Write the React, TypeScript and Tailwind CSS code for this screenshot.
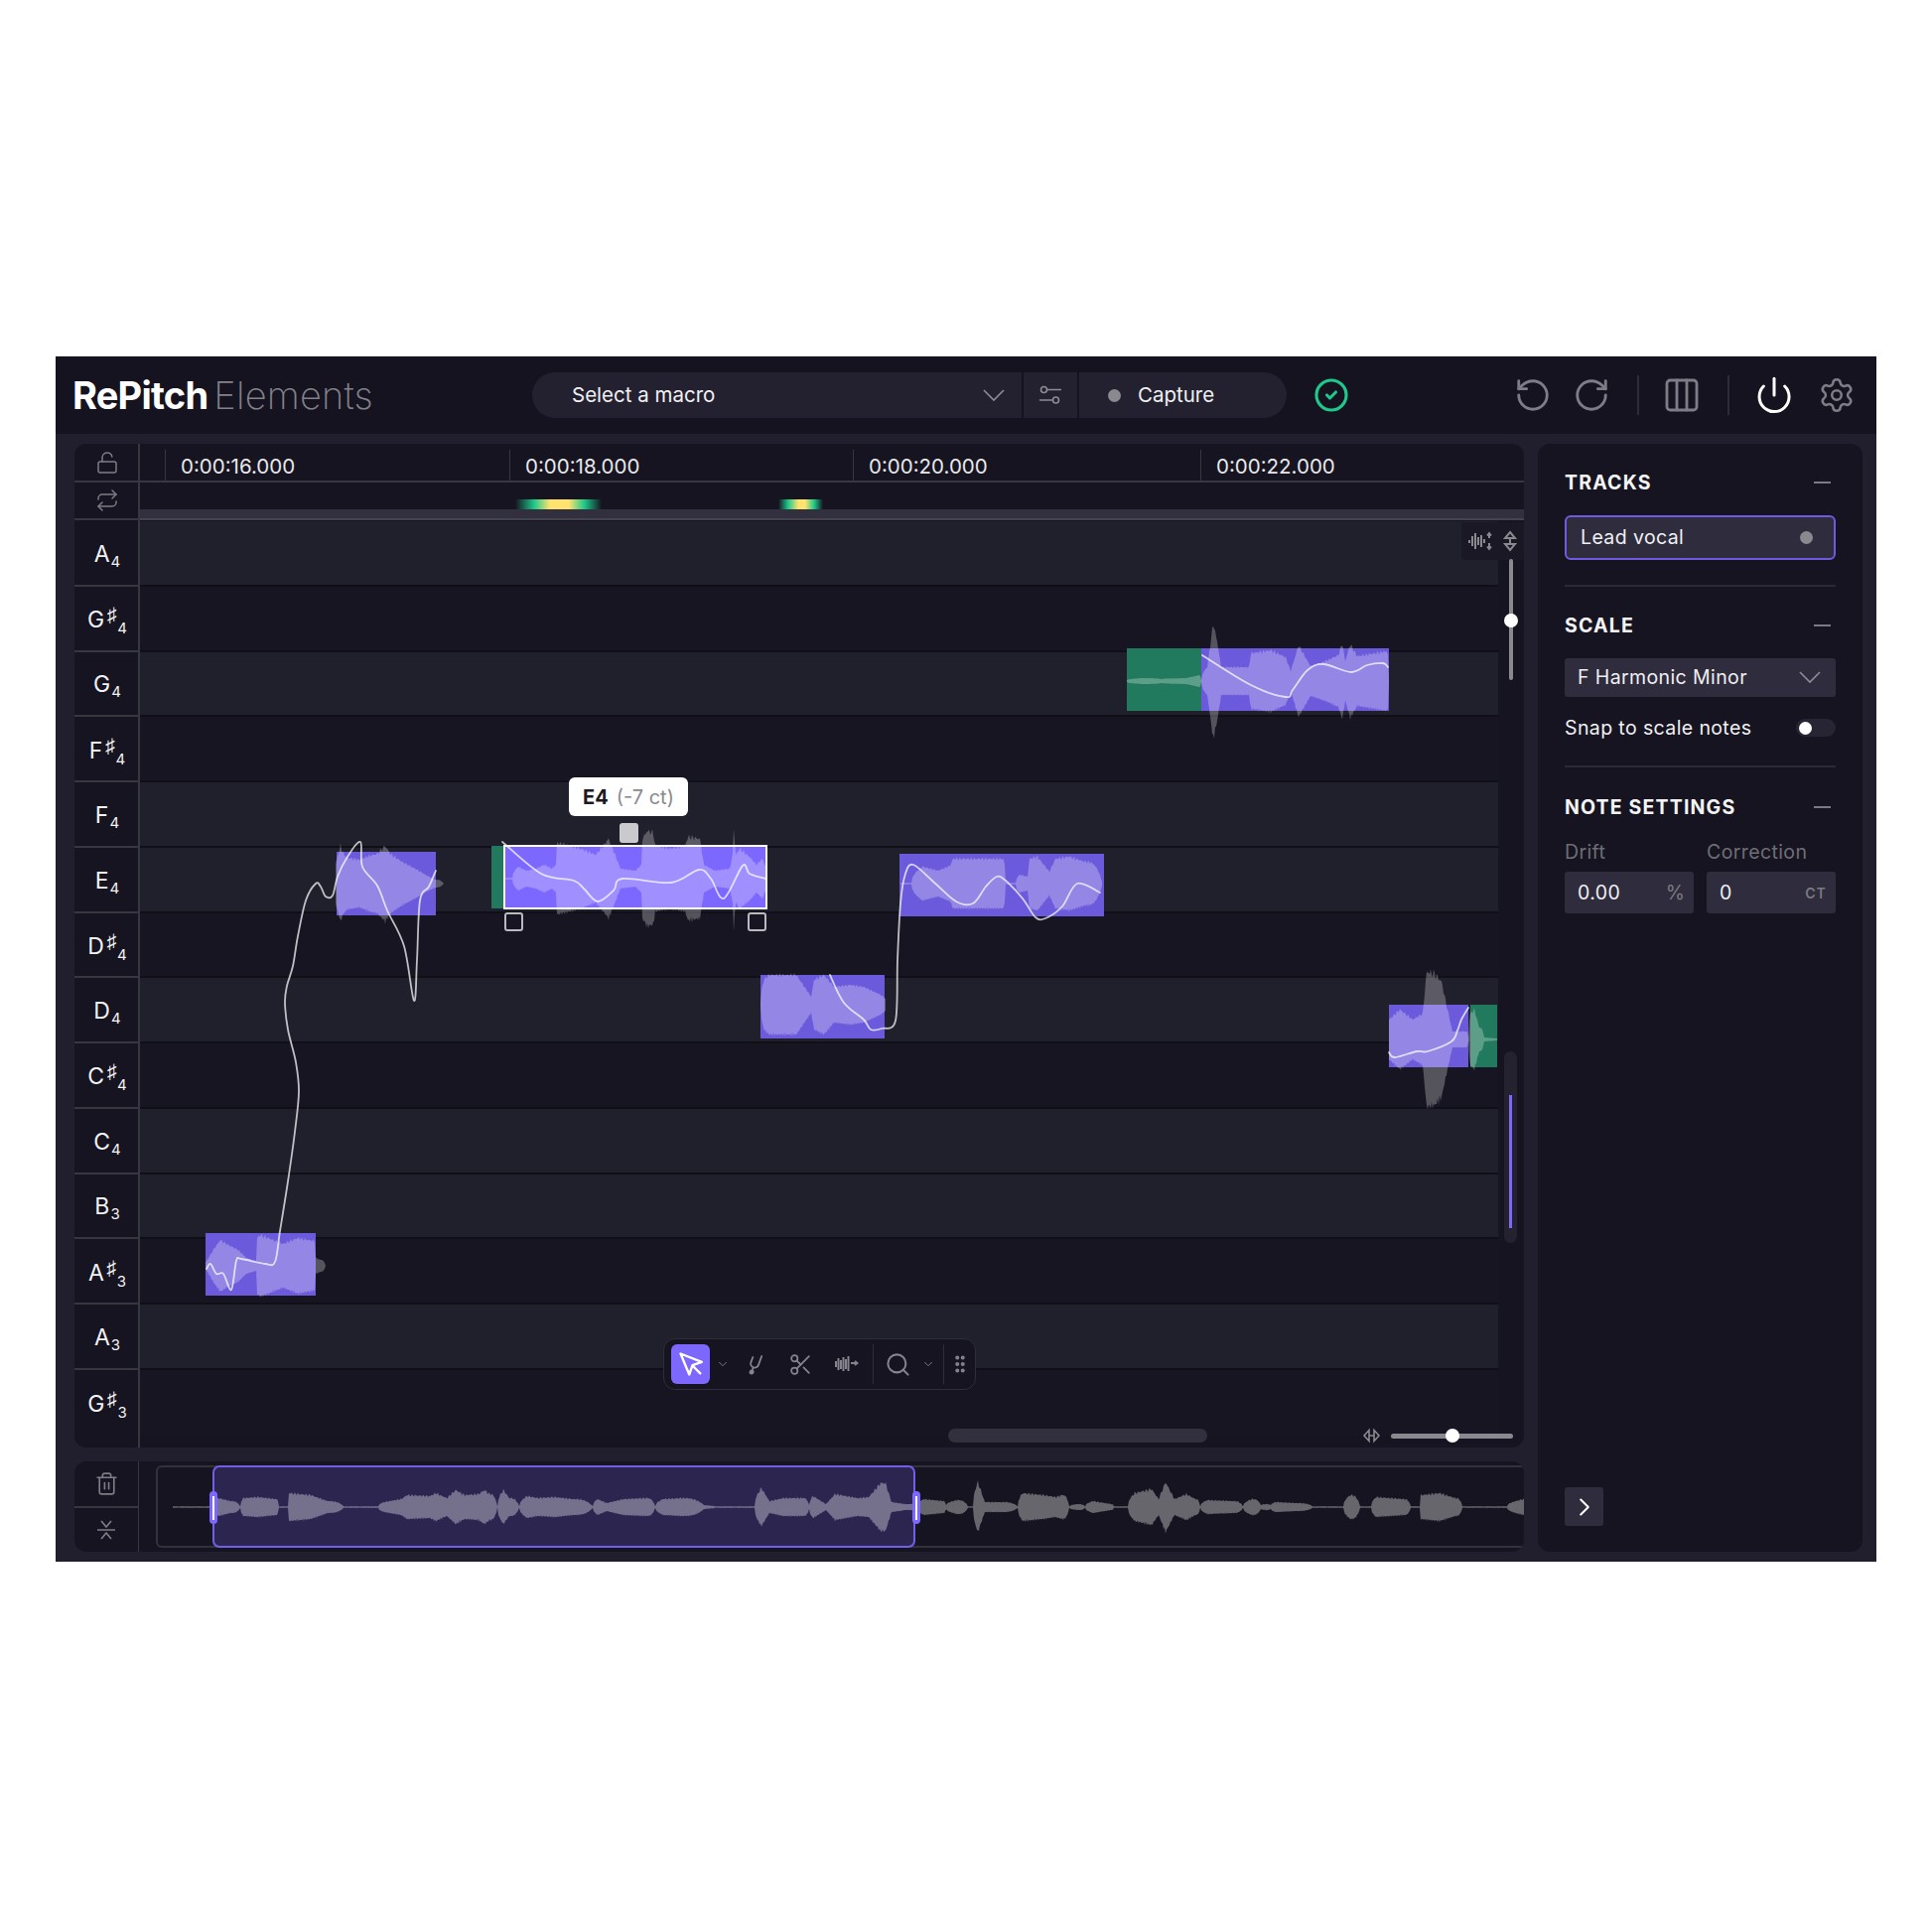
import React from 'react';
import {
  ChevronDown,
  ChevronRight,
  CircleCheck,
  Columns3,
  GripVertical,
  LockOpen,
  Power,
  Repeat,
  RotateCcw,
  RotateCw,
  Scissors,
  Search,
  Settings,
  Trash2,
} from 'lucide-react';

type Pt = [number, number];

// builds a mirrored waveform outline from [x, half height] pairs
function wave(cy: number, env: Pt[], amt = 0.08) {
  const top: string[] = [];
  const bottom: string[] = [];
  const start = env[0][0];
  const end = env[env.length - 1][0];
  let seg = 0;
  let i = 0;
  for (let x = start; x <= end; x += 1) {
    while (seg < env.length - 2 && x > env[seg + 1][0]) seg++;
    const [x0, h0] = env[seg];
    const [x1, h1] = env[seg + 1];
    let t = Math.min((x - x0) / Math.max(x1 - x0, 0.01), 1);
    // lobes swell fast out of the thin line and drop back late
    if (h0 <= 2 && h1 > 2) t = Math.sqrt(t);
    if (h1 <= 2 && h0 > 2) t = t * t * t;
    let h = h0 + (h1 - h0) * t;
    if (h <= 1) h *= 0.7;
    const a = 1 + amt * (Math.sin(i * 1.7) + Math.sin(i * 4.1)) * 0.5;
    const b = 1 + amt * (Math.sin(i * 2.3) + Math.sin(i * 3.3)) * 0.5;
    top.push(`${x.toFixed(1)} ${(cy - h * a).toFixed(1)}`);
    bottom.unshift(`${x.toFixed(1)} ${(cy + h * b).toFixed(1)}`);
    i++;
  }
  return `M${top.join('L')}L${bottom.join('L')}Z`;
}

// smooth line through points
function curve(p: Pt[]) {
  let d = `M${p[0][0]} ${p[0][1]}`;
  for (let i = 0; i < p.length - 1; i++) {
    const a = p[i - 1] || p[i];
    const b = p[i];
    const c = p[i + 1];
    const e = p[i + 2] || c;
    const c1x = b[0] + (c[0] - a[0]) / 6;
    const c1y = b[1] + (c[1] - a[1]) / 6;
    const c2x = c[0] - (e[0] - b[0]) / 6;
    const c2y = c[1] - (e[1] - b[1]) / 6;
    d += `C${c1x.toFixed(1)} ${c1y.toFixed(1)} ${c2x.toFixed(1)} ${c2y.toFixed(1)} ${c[0]} ${c[1]}`;
  }
  return d;
}

const rows = [
  { n: 'A', o: 4, light: true },
  { n: 'G', o: 4, sharp: true },
  { n: 'G', o: 4, light: true },
  { n: 'F', o: 4, sharp: true },
  { n: 'F', o: 4, light: true },
  { n: 'E', o: 4, light: true },
  { n: 'D', o: 4, sharp: true },
  { n: 'D', o: 4, light: true },
  { n: 'C', o: 4, sharp: true },
  { n: 'C', o: 4, light: true },
  { n: 'B', o: 3, light: true },
  { n: 'A', o: 3, sharp: true },
  { n: 'A', o: 3, light: true },
  { n: 'G', o: 3, sharp: true },
];

const noteWaves: [number, Pt[]][] = [
  [1275, [[207, 3], [216, 18], [222, 26], [228, 22], [240, 16], [248, 8], [258, 5], [259, 28], [262, 31], [270, 28], [285, 22], [300, 28], [310, 26], [317, 25], [318, 8], [323, 6], [328, 0]]],
  [890, [[338, 20], [343, 38], [346, 30], [350, 26], [362, 24], [372, 28], [380, 30], [388, 38], [393, 30], [405, 22], [420, 14], [430, 8], [438, 4], [447, 0]]],
  [885, [[508, 1], [516, 1], [522, 12], [530, 8], [540, 10], [548, 14], [556, 10], [560, 14], [561, 36], [570, 34], [585, 30], [600, 24], [610, 36], [613, 40], [618, 28], [625, 10], [640, 8], [646, 14], [647, 40], [652, 48], [658, 46], [660, 33], [675, 30], [690, 33], [693, 42], [705, 40], [709, 14], [720, 8], [735, 10], [738, 24], [739, 52], [741, 24], [745, 30], [755, 22], [762, 14], [768, 20], [771, 12]]],
  [1012, [[766, 2], [770, 26], [775, 30], [802, 30], [813, 14], [817, 8], [820, 25], [830, 30], [840, 18], [857, 20], [870, 18], [887, 10], [892, 6]]],
  [890, [[907, 1], [918, 1], [929, 17], [945, 13], [957, 18], [960, 25], [1010, 25], [1013, 1], [1023, 1], [1027, 9], [1035, 7], [1037, 25], [1045, 27], [1057, 12], [1063, 25], [1077, 27], [1093, 22], [1110, 2]]],
  [686, [[1135, 1], [1150, 3], [1170, 2], [1195, 3], [1208, 6], [1210, 1], [1216, 14], [1222, 58], [1226, 40], [1230, 14], [1258, 14], [1260, 28], [1280, 31], [1295, 24], [1300, 10], [1308, 36], [1320, 15], [1335, 20], [1348, 26], [1352, 38], [1355, 20], [1360, 37], [1367, 25], [1397, 30], [1399, 1]]],
  [1047, [[1399, 20], [1410, 30], [1423, 20], [1433, 26], [1437, 68], [1445, 66], [1452, 58], [1458, 30], [1463, 8], [1477, 8], [1479, 2], [1481, 26], [1485, 30], [1490, 12], [1495, 2], [1508, 1]]],
];

const pitchLines: Pt[][] = [
  [[208, 1278], [212, 1273], [218, 1283], [225, 1283], [233, 1299], [238, 1270], [243, 1268], [267, 1273], [277, 1271], [282, 1240], [290, 1190], [297, 1140], [301, 1100], [298, 1070], [290, 1037], [287, 1010], [289, 993], [295, 973], [300, 943], [308, 907], [318, 890], [323, 893], [328, 903], [335, 902], [340, 883], [350, 863], [363, 848], [365, 873], [380, 892], [390, 917], [407, 953], [417, 1008], [420, 967], [423, 907], [432, 893], [439, 877]],
  [[506, 848], [545, 880], [578, 887], [588, 895], [602, 908], [618, 897], [627, 885], [676, 889], [704, 876], [716, 885], [729, 905], [748, 872], [755, 880], [771, 885]],
  [[836, 982], [850, 1010], [870, 1027], [877, 1037], [888, 1036], [902, 1028], [904, 967], [907, 910], [912, 880], [920, 871], [940, 888], [963, 908], [980, 910], [993, 893], [1004, 883], [1013, 887], [1030, 905], [1043, 924], [1053, 925], [1070, 913], [1085, 890], [1108, 899]],
  [[1211, 660], [1260, 690], [1295, 702], [1302, 695], [1317, 675], [1333, 669], [1361, 677], [1377, 670], [1393, 668], [1398, 672]],
  [[1399, 1060], [1405, 1065], [1427, 1059], [1438, 1059], [1462, 1049], [1468, 1038], [1472, 1027], [1479, 1015]],
];

const miniEnv: Pt[] = [
  [174, 1], [214, 1], [220, 9], [232, 6], [242, 1], [245, 9], [260, 10], [278, 8], [281, 1], [290, 1], [291, 14], [313, 12], [330, 6], [346, 1], [381, 1], [387, 5], [404, 8], [410, 12], [433, 11], [439, 14], [450, 9], [459, 17], [468, 12], [482, 13], [488, 17], [493, 13], [501, 1], [507, 17], [513, 9], [523, 1], [531, 11], [542, 9], [559, 10], [577, 8], [597, 1], [602, 8], [611, 4], [628, 8], [651, 9], [660, 1], [668, 8], [686, 9], [709, 2], [720, 1], [760, 1], [767, 19], [775, 6], [789, 9], [809, 9], [815, 2], [819, 11], [832, 3], [841, 13], [864, 9], [875, 10], [887, 24], [892, 24], [898, 5], [912, 3], [918, 3], [922, 1], [931, 8], [950, 6], [953, 2], [964, 7], [975, 1], [980, 1], [985, 25], [992, 5], [1009, 5], [1025, 1], [1030, 14], [1051, 12], [1063, 10], [1070, 12], [1077, 1], [1086, 3], [1093, 1], [1101, 6], [1119, 3], [1122, 1], [1136, 1], [1143, 14], [1160, 18], [1167, 8], [1174, 25], [1183, 8], [1195, 13], [1204, 8], [1209, 1], [1216, 7], [1242, 6], [1252, 1], [1261, 8], [1270, 2], [1275, 3], [1280, 2], [1285, 5], [1306, 4], [1322, 1], [1353, 1], [1360, 12], [1370, 1], [1381, 1], [1386, 10], [1414, 8], [1421, 1], [1430, 1], [1431, 12], [1450, 14], [1466, 9], [1473, 1], [1518, 1], [1535, 8],
];

function Chev({ width = 22 }: { width?: number }) {
  return (
    <svg width={width} height={width * 0.55} viewBox="0 0 22 12" fill="none" stroke="#8d8c94" strokeWidth="1.6">
      <path d="M1 1l10 10L21 1" />
    </svg>
  );
}

function KeyLabel({ n, o, sharp }: { n: string; o: number; sharp?: boolean }) {
  return (
    <div className="flex items-end justify-center text-[23px] leading-none text-[#f2f2f4]">
      <span>{n}</span>
      {sharp ? (
        <span className="ml-[1px] flex flex-col items-center">
          <span className="text-[20px] leading-[14px] mr-[8px]">♯</span>
          <span className="ml-[12px] -mb-[3px] text-[15px] leading-[13px]">{o}</span>
        </span>
      ) : (
        <span className="ml-[1px] -mb-[3px] text-[15px] leading-[15px]">{o}</span>
      )}
    </div>
  );
}

function PanelHeading({ title }: { title: string }) {
  return (
    <div className="flex items-center justify-between pr-[5px]">
      <span className="text-[19.500px] leading-[22px] font-bold tracking-[0.06em] text-[#f4f4f6]">{title}</span>
      <span className="h-[2px] w-[17px] bg-[#7b7a82]" />
    </div>
  );
}

const Hr = () => <div className="h-[2px] bg-[#2b2936]" />;

function App() {
  return (
    <div
      className="min-h-[1946px] bg-white pt-[359px] pl-[56px]"
      style={{ fontFamily: 'Inter, "Noto Sans", sans-serif' }}
    >
      <div className="flex h-[1214px] w-[1834px] flex-col bg-[#211f2e]">
        {/* top bar */}
        <div className="flex h-[78px] flex-none items-center bg-[#151320]">
          <div className="flex w-[480px] items-baseline pl-[17px]">
            <span className="text-[38px] leading-none font-bold tracking-[-0.02em] text-white">RePitch</span>
            <span className="ml-[6px] text-[38px] leading-none font-extralight tracking-[0.005em] text-[#83828a]">Elements</span>
          </div>
          <div className="flex h-[46px] w-[760px] flex-none items-center rounded-full bg-[#232130] text-[20.500px] text-[#f0f0f3]">
            <div className="flex h-full w-[495px] items-center justify-between border-r-2 border-[#151320] pl-[40px] pr-[17px]">
              <span>Select a macro</span>
              <Chev />
            </div>
            <div className="flex h-full w-[56px] items-center justify-center border-r-2 border-[#151320]">
              <svg width="26" height="26" viewBox="0 0 26 26" fill="none" stroke="#8d8c94" strokeWidth="1.6">
                <circle cx="6.500" cy="7.500" r="3" />
                <path d="M10 7.500h14M2 18h13" />
                <circle cx="18.500" cy="18" r="3" />
              </svg>
            </div>
            <div className="flex items-center pl-[29px]">
              <span className="h-[13px] w-[13px] rounded-full bg-[#8a898f]" />
              <span className="ml-[17px]">Capture</span>
            </div>
          </div>
          <CircleCheck size={36} strokeWidth={2.1} className="ml-[27px] text-[#1ec98b]" />
          <div className="ml-auto flex items-center pr-[21px]">
            <RotateCcw size={38} strokeWidth={1.8} className="text-[#7e7d85]" />
            <RotateCw size={38} strokeWidth={1.8} className="ml-[21px] text-[#7e7d85]" />
            <div className="ml-[27px] h-[40px] w-[2px] bg-[#2e2c38]" />
            <Columns3 size={40} strokeWidth={1.7} className="ml-[23px] text-[#7e7d85]" />
            <div className="ml-[26px] h-[40px] w-[2px] bg-[#2e2c38]" />
            <Power size={40} strokeWidth={1.8} className="ml-[25px] text-white" />
            <Settings size={38} strokeWidth={1.6} className="ml-[24px] text-[#7e7d85]" />
          </div>
        </div>

        <div className="flex min-h-0 flex-1 gap-[14px] pt-[10px] pr-[14px] pb-[10px] pl-[19px]">
          {/* left column */}
          <div className="flex min-w-0 flex-1 flex-col gap-[14px]">
            {/* editor */}
            <div className="relative flex h-[1011px] flex-none flex-col overflow-hidden rounded-[12px] bg-[#161420]">
              <div className="flex h-[39px] flex-none border-b-2 border-[#38363f]">
                <div className="flex w-[66px] flex-none items-center justify-center border-r-2 border-[#38363f] pl-[2px]">
                  <LockOpen size={24} strokeWidth={1.5} className="text-[#7e7d85]" />
                </div>
                <div className="w-[25px] flex-none" />
                {['0:00:16.000', '0:00:18.000', '0:00:20.000', '0:00:22.000'].map((t, i) => (
                  <div
                    key={t}
                    className={`mt-[6px] flex-none border-l-[1.5px] border-[#38363f] pl-[15px] text-[20.500px] leading-[33px] text-[#e8e8eb] ${
                      i === 0 ? 'w-[347px]' : i === 1 ? 'w-[346px]' : i === 2 ? 'w-[350px]' : 'w-[200px]'
                    }`}
                  >
                    {t}
                  </div>
                ))}
              </div>
              <div className="flex h-[38px] flex-none">
                <div className="flex w-[66px] flex-none items-center justify-center border-r-2 border-b-2 border-[#38363f] pl-[2px]">
                  <Repeat size={24} strokeWidth={1.5} className="text-[#7e7d85]" />
                </div>
                <div className="flex flex-1 flex-col">
                  <div className="relative flex-1">
                    <div className="absolute top-[17px] left-[378px] h-[10px] w-[87px] bg-[linear-gradient(90deg,transparent,#1ec98b_22%,#ffe36e_40%,#ffe36e_62%,#1ec98b_80%,transparent)]" />
                    <div className="absolute top-[17px] left-[643px] h-[10px] w-[45px] bg-[linear-gradient(90deg,transparent,#1ec98b_22%,#ffe36e_45%,#ffe36e_60%,#1ec98b_80%,transparent)]" />
                  </div>
                  <div className="h-[9px] bg-[#32303e]" />
                  <div className="h-[2px] bg-[#45434f]" />
                </div>
              </div>
              {/* piano roll */}
              <div className="relative flex min-h-0 flex-1">
                <div className="flex w-[66px] flex-none flex-col border-r-2 border-[#38363f] pt-[1px]">
                  {rows.map((r, i) => (
                    <div
                      key={i}
                      className={`flex flex-none items-center justify-center pt-[3px] pl-[2px] ${
                        i < 13 ? 'h-[65.750px] border-b-2 border-[#38363f]' : 'h-[65.750px]'
                      }`}
                    >
                      <KeyLabel n={r.n} o={r.o} sharp={r.sharp} />
                    </div>
                  ))}
                </div>
                <div className="flex w-[1368px] flex-none flex-col pt-[1px]">
                  {rows.map((r, i) => (
                    <div
                      key={i}
                      className={`h-[65.750px] flex-none border-b-2 ${r.light ? 'bg-[#201f2c]' : 'bg-[#161521]'} ${
                        i === 13 ? 'border-transparent' : 'border-[#100f17]'
                      }`}
                    />
                  ))}
                </div>

                {/* notes, waveforms and pitch curves */}
                <svg className="absolute top-0 left-0 h-[934px] w-[1460px]" viewBox="75 524 1460 934" fill="none">
                  <g fill="#6b5adb">
                    <rect x="207" y="1242" width="111" height="63" />
                    <rect x="339" y="858" width="100" height="64" />
                    <rect x="766" y="982" width="125" height="64" />
                    <rect x="906" y="860" width="206" height="63" />
                    <rect x="1210" y="653" width="189" height="63" />
                    <rect x="1399" y="1012" width="80" height="63" />
                  </g>
                  <g fill="#227a5e">
                    <rect x="495" y="852" width="13" height="63" />
                    <rect x="1135" y="653" width="75" height="63" />
                    <rect x="1481" y="1012" width="27" height="63" />
                  </g>
                  <rect x="508" y="852" width="264" height="63" fill="#7d68ff" />
                  {noteWaves.map(([cy, env], i) => (
                    <path key={i} d={wave(cy, env)} fill="#fff" fillOpacity="0.27" />
                  ))}
                  <rect x="508" y="852" width="264" height="63" stroke="#fff" strokeWidth="2" />
                  {pitchLines.map((p, i) => (
                    <path key={i} d={curve(p)} stroke="#fff" strokeOpacity="0.72" strokeWidth="1.8" strokeLinejoin="round" strokeLinecap="round" />
                  ))}
                </svg>

                {/* selected note handles */}
                <div className="absolute top-[259px] left-[498px] flex h-[39px] w-[120px] items-center justify-center rounded-[6px] bg-white text-[20px]">
                  <span className="font-bold text-[#1b1a22]">E4</span>
                  <span className="ml-[8px] text-[#8b8a92]">(-7 ct)</span>
                </div>
                <div className="absolute top-[305px] left-[549px] h-[20px] w-[19px] rounded-[3px] bg-[#c9c9ce]" />
                <div className="absolute top-[395px] left-[433px] h-[19px] w-[19px] rounded-[3px] border-2 border-[#b9b9bf]" />
                <div className="absolute top-[395px] left-[678px] h-[19px] w-[19px] rounded-[3px] border-2 border-[#b9b9bf]" />

                {/* pitch scroll controls */}
                <div className="absolute top-[2px] right-0 flex h-[38px] w-[63px] items-center justify-between rounded-bl-[4px] bg-[#1a1825] pr-[5px] pl-[6px]">
                  <svg width="26" height="22" viewBox="0 0 26 22" fill="none" stroke="#8a898f" strokeWidth="2">
                    <path d="M2 10v3M5 6v10M8 3v16M11 7v8M14 5v12M17 9v4M22 3v5M20 5.500 22 3l2 2.500M22 13v6M20 16.500 22 19l2-2.500" />
                  </svg>
                  <svg width="18" height="22" viewBox="0 0 18 22" fill="none" stroke="#8a898f" strokeWidth="2">
                    <path d="M9 2 14 8H4zM9 20l5-6H4zM9 8v6" />
                  </svg>
                </div>
                <div className="absolute top-[39px] left-[1445px] h-[122px] w-[4px] rounded-full bg-[#8a898f]" />
                <div className="absolute top-[94px] left-[1440px] h-[14px] w-[14px] rounded-full bg-white" />
                <div className="absolute top-[535px] left-[1440px] flex h-[193px] w-[13px] items-start justify-center rounded-full bg-[#24222f] pt-[44px]">
                  <div className="h-[134px] w-[3px] bg-[#7d68ff]" />
                </div>

                {/* toolbar */}
                <div className="absolute top-[824px] left-[593px] flex h-[52px] w-[315px] items-center rounded-[12px] border border-[#2f2d3a] bg-[#161420] pl-[7px] text-[#85848c]">
                  <div className="flex h-[40px] w-[39px] flex-none items-center justify-center rounded-[6px] bg-[#7d68ff]">
                    <svg width="28" height="28" viewBox="0 0 24 24" fill="none" stroke="#fff" strokeWidth="2" strokeLinejoin="round" strokeLinecap="round">
                      <path d="M3 3l7.500 18 2.800-8 8-2.800zM13.500 13.500 20 20" />
                    </svg>
                  </div>
                  <ChevronDown size={14} strokeWidth={1.5} className="ml-[6px]" />
                  <svg width="24" height="24" viewBox="0 0 24 24" fill="none" stroke="currentColor" strokeWidth="1.8" strokeLinecap="round" className="ml-[13px]">
                    <g transform="rotate(20 12 12)">
                      <path d="M8 6v5.500a4 4 0 0 0 8 0V2M12 15.500v4" />
                      <circle cx="12" cy="20.500" r="1.600" fill="currentColor" />
                    </g>
                  </svg>
                  <Scissors size={25} strokeWidth={1.7} className="ml-[22px]" />
                  <svg width="24" height="24" viewBox="0 0 24 24" fill="none" stroke="currentColor" strokeWidth="2" className="ml-[22px]">
                    <path d="M1 9v6M3.500 6v12M6 8v9M8.500 5v14M11 7v10M13.500 4v15M16 11h6.500M20 9l2.500 2-2.500 2" />
                  </svg>
                  <div className="ml-[14px] h-[40px] w-[1px] bg-[#2f2d3a]" />
                  <Search size={27} strokeWidth={1.8} className="ml-[11px]" />
                  <ChevronDown size={14} strokeWidth={1.5} className="ml-[10px]" />
                  <div className="ml-[8px] h-[40px] w-[1px] bg-[#2f2d3a]" />
                  <GripVertical size={22} strokeWidth={2.4} className="ml-[5px]" />
                </div>

                {/* bottom scroll and zoom */}
                <div className="absolute top-[915px] left-[880px] h-[14px] w-[261px] rounded-full bg-[#32303e]" />
                <div className="absolute top-[913px] left-[1297px] flex h-[18px] items-center">
                  <svg width="19" height="18" viewBox="0 0 19 18" fill="none" stroke="#8a898f" strokeWidth="1.6">
                    <path d="M2 9 7 3.500v11zM17 9l-5-5.500v11zM7 9h5" />
                  </svg>
                  <div className="relative ml-[10px] h-[5px] w-[123px] rounded-full bg-[#8a898f]">
                    <div className="absolute -top-[4.500px] left-[55px] h-[14px] w-[14px] rounded-full bg-white" />
                  </div>
                </div>
              </div>
            </div>

            {/* overview */}
            <div className="flex h-[91px] flex-none overflow-hidden rounded-[12px] bg-[#161420]">
              <div className="flex w-[65px] flex-none flex-col border-r-[1.5px] border-[#38363f]">
                <div className="flex flex-1 items-center justify-center border-b-2 border-[#38363f]">
                  <Trash2 size={25} strokeWidth={1.6} className="text-[#7e7d85]" />
                </div>
                <div className="flex flex-1 items-center justify-center">
                  <svg width="24" height="24" viewBox="0 0 24 24" fill="none" stroke="#7e7d85" strokeWidth="1.7">
                    <path d="M3 12h18M7 3l5 6 5-6M7 21l5-6 5 6" />
                  </svg>
                </div>
              </div>
              <div className="relative my-[4px] ml-[17px] flex-1 rounded-l-[6px] border-y-2 border-l-2 border-[#33313c]">
                <div className="absolute -top-[2px] -bottom-[2px] left-[55px] w-[708px] rounded-[7px] border-2 border-[#7060e8] bg-[#2c2550]" />
                <svg className="absolute -top-[6px] -left-[2px] h-[91px] w-[1378px]" viewBox="157 1472 1378 91" fill="none">
                  <path d={wave(1518, miniEnv, 0.12)} fill="#fff" fillOpacity="0.35" />
                </svg>
                <div className="absolute top-[24px] left-[52px] flex h-[33px] w-[8px] items-center justify-center rounded-full bg-[#7d68ff]">
                  <div className="h-[24px] w-[2px] bg-white" />
                </div>
                <div className="absolute top-[24px] left-[760px] flex h-[33px] w-[8px] items-center justify-center rounded-full bg-[#7d68ff]">
                  <div className="h-[24px] w-[2px] bg-white" />
                </div>
              </div>
            </div>
          </div>

          {/* side panel */}
          <div className="flex w-[327px] flex-none flex-col rounded-[12px] bg-[#161420] px-[27px] pt-[28px] pb-[26px] text-[19.500px] leading-[27px] text-[#f0f0f3]">
            <PanelHeading title="TRACKS" />
            <div className="mt-[22px] flex h-[45px] items-center justify-between rounded-[6px] border-2 border-[#6e5be0] bg-[#2f2c3d] pr-[21px] pl-[14px] tracking-[0.02em]">
              <span>Lead vocal</span>
              <span className="h-[13px] w-[13px] rounded-full bg-[#8a898f]" />
            </div>
            <div className="mt-[25px]"><Hr /></div>
            <div className="mt-[28px]"><PanelHeading title="SCALE" /></div>
            <div className="mt-[22px] flex h-[39px] items-center justify-between rounded-[3px] bg-[#2f2c3d] pr-[15px] pl-[13px] tracking-[0.02em]">
              <span>F Harmonic Minor</span>
              <Chev />
            </div>
            <div className="mt-[22px] flex h-[18px] items-center justify-between tracking-[0.02em]">
              <span>Snap to scale notes</span>
              <div className="flex h-[18px] w-[40px] items-center rounded-full bg-[#272534] pl-[3px]">
                <span className="h-[13px] w-[13px] rounded-full bg-white" />
              </div>
            </div>
            <div className="mt-[29px]"><Hr /></div>
            <div className="mt-[29px]"><PanelHeading title="NOTE SETTINGS" /></div>
            <div className="mt-[21px] flex gap-[13px]">
              <div className="flex-1">
                <div className="text-[#6f6e76] tracking-[0.02em]">Drift</div>
                <div className="mt-[6px] flex h-[42px] items-center justify-between rounded-[3px] bg-[#2f2c3d] pr-[9px] pl-[13px]">
                  <span className="tracking-[0.02em]">0.00</span>
                  <span className="text-[#7b7a82]">%</span>
                </div>
              </div>
              <div className="flex-1">
                <div className="text-[#6f6e76] tracking-[0.02em]">Correction</div>
                <div className="mt-[6px] flex h-[42px] items-center justify-between rounded-[3px] bg-[#2f2c3d] pr-[9px] pl-[13px]">
                  <span>0</span>
                  <span className="text-[14px] font-semibold tracking-[0.08em] text-[#7b7a82]">CT</span>
                </div>
              </div>
            </div>
            <div className="mt-auto flex h-[39px] w-[39px] items-center justify-center rounded-[3px] bg-[#2f2c3d]">
              <ChevronRight size={30} strokeWidth={1.6} className="text-white" />
            </div>
          </div>
        </div>
      </div>
    </div>
  );
}

export default App;
